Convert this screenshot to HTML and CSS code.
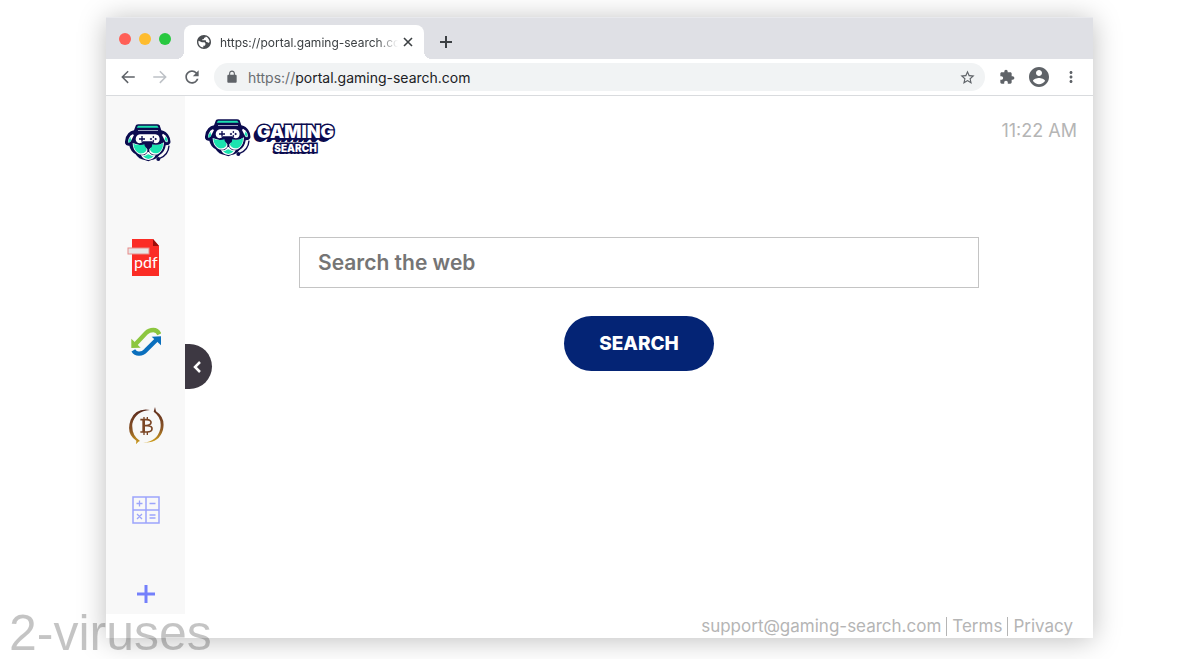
FILE: index.html
```html
<!DOCTYPE html>
<html lang="en">

<head>
    <meta charset="UTF-8">
    <meta name="viewport" content="width=device-width, initial-scale=1.0">
    <title>Gaming Search</title>
    <link rel="stylesheet" href="styles.css">
</head>

<body>

    <svg class="sprite" aria-hidden="true">
        <symbol id="dog" viewBox="44 58 138 112">
            <path fill="#0b0b4f" d="M77 60q3-2 7-2h56q5 0 8 3l5 15q15 4 21 14 8 12 6 24-4 8-14 7-2 20-19 30-9 12-24 14l-9 4-11-4q-18-2-27-17-16-10-19-26-10 2-13-7-1-18 10-30 7-8 17-9z" />
            <path fill="#1be3b0" d="M83 62h58l4 6H79z" />
            <path fill="#9aa0bd" d="M83 75h60v3H83z" />
            <path fill="#fff" d="M67 88q-8 3-12 13-3 9-1 12 6 0 9-7l8-16z" />
            <path fill="#1be3b0" d="M60 96q-6 7-6 17 6 0 9-7z" />
            <path fill="#fff" d="M158 86q9 3 13 14 3 8 0 12-6 0-9-8l-7-14z" />
            <path fill="#1be3b0" d="M166 94q6 7 5 17-5 0-8-8z" />
            <path fill="#fff" d="M89 88h46q12 1 13 14-1 13-12 13-5 0-10-6H98q-5 6-10 6-11-1-12-12 1-14 13-15z" />
            <path fill="none" stroke="#0b0b4f" stroke-width="4" d="M95 93v17M86 102h18" />
            <path fill="#0b0b4f" d="M129 92l3 4-3 4-3-4zM129 104l3 4-3 4-3-4zM122 98l4 4-4 4-4-4zM136 98l4 4-4 4-4-4z" />
            <path fill="#fff" d="M67 114q0 20 14 31 14 9 26 0l7-8 7 8q13 9 26 0 13-11 14-33l-14 7-60 1z" />
            <path fill="#1be3b0" d="M69 115q0 12 6 20 8 12 20 10 10-1 14-11l-4-17q-12 4-20 2-9 2-16-4zM158 113q1 13-5 22-7 11-19 10-10-1-15-11l4-17q12 5 20 2 9 0 15-6z" />
            <path fill="#fff" d="M92 150q10 2 16-4l6-7 6 7q7 6 16 4-5 13-22 15-17-2-22-15z" />
            <path fill="#1be3b0" d="M98 153q8 0 12-4 4-3 8 0 5 4 12 4-6 8-16 9-10-1-16-9z" />
            <path fill="#0b0b4f" d="M102 117q5-4 12-4t12 4q0 9-6 12l-3 4v8h-6v-8l-3-4q-6-4-6-12z" />
            <path fill="none" stroke="#f8f8f8" stroke-width="8" d="M172 122q-2 24-24 34" />
            <path fill="none" stroke="#0b0b4f" stroke-width="4" d="M176 122q-2 29-28 38" />
            <circle cx="144" cy="162" r="6" fill="#0b0b4f" />
        </symbol>
    </svg>

    <div class="browser">
        <div class="tab-bar">
            <div class="lights">
                <span class="light red"></span>
                <span class="light yellow"></span>
                <span class="light green"></span>
            </div>
            <div class="tab">
                <svg class="globe" viewBox="2 2 20 20" fill="#4a4d51">
                    <path d="M12 2C6.48 2 2 6.48 2 12s4.480 10 10 10 10-4.480 10-10S17.520 2 12 2zm-1 17.930c-3.950-.49-7-3.850-7-7.930 0-.62.08-1.210.21-1.790L9 12.500h3c1.100 0 2 .9 2 2v1c0 1.100-.9 2-2 2h-1zM17.900 13.390c-.26-.81-1-1.390-1.900-1.390h-1v-1.500c0-.55-.45-1-1-1H9.500v-1.500H11c.55 0 1-.45 1-1V6h1c1.100 0 1.500-.9 1.500-1.700 2.930 1.190 5.500 4.360 5.500 7.700z" />
                </svg>
                <span class="tab-title">https://portal.gaming-search.com</span>
                <button class="icon-btn tab-close" aria-label="Close tab">
                    <svg width="10" height="10" viewBox="0 0 10 10" fill="none" stroke="#3c4043" stroke-width="1.600">
                        <path d="M1 1l8 8M9 1l-8 8" />
                    </svg>
                </button>
            </div>
            <button class="icon-btn new-tab" aria-label="New tab">
                <svg width="12" height="12" viewBox="0 0 12 12" fill="none" stroke="#3c4043" stroke-width="2">
                    <path d="M6 0v12M0 6h12" />
                </svg>
            </button>
        </div>

        <div class="toolbar">
            <button class="icon-btn" aria-label="Back">
                <svg width="18" height="18" viewBox="0 0 24 24" fill="#5f6368">
                    <path d="M21 11H6.800l6.100-6.100L11.500 3.500 3 12l8.500 8.500 1.400-1.400L6.800 13H21z" />
                </svg>
            </button>
            <button class="icon-btn" aria-label="Forward">
                <svg width="18" height="18" viewBox="0 0 24 24" fill="#bdc1c6">
                    <path d="M3 11h14.200l-6.100-6.100 1.400-1.400L21 12l-8.500 8.500-1.400-1.400 6.100-6.100H3z" />
                </svg>
            </button>
            <button class="icon-btn" aria-label="Reload">
                <svg width="20" height="20" viewBox="0 0 24 24" fill="#5f6368">
                    <path d="M17.650 6.350C16.200 4.900 14.210 4 12 4c-4.420 0-7.990 3.580-7.990 8s3.570 8 7.990 8c3.730 0 6.840-2.550 7.730-6h-2.080c-.82 2.330-3.040 4-5.650 4-3.310 0-6-2.690-6-6s2.690-6 6-6c1.660 0 3.140.69 4.220 1.780L13 11h7V4l-2.350 2.350z" />
                </svg>
            </button>
            <div class="omnibox">
                <svg width="14" height="14" viewBox="0 0 24 24" fill="#5f6368">
                    <path d="M18 8h-1V6c0-2.760-2.240-5-5-5S7 3.240 7 6v2H6c-1.100 0-2 .9-2 2v10c0 1.100.9 2 2 2h12c1.100 0 2-.9 2-2V10c0-1.100-.9-2-2-2zM8.900 8V6c0-1.710 1.390-3.100 3.100-3.100s3.100 1.390 3.100 3.100v2z" />
                </svg>
                <span class="url"><span class="scheme">https://</span>portal.gaming-search.com</span>
                <button class="icon-btn" aria-label="Bookmark this page">
                    <svg width="17" height="17" viewBox="0 0 24 24" fill="#5f6368">
                        <path d="M22 9.240l-7.190-.62L12 2 9.190 8.630 2 9.240l5.460 4.730L5.820 21 12 17.270 18.180 21l-1.630-7.030L22 9.240zM12 15.400l-3.760 2.270 1-4.280-3.320-2.880 4.380-.38L12 6.100l1.710 4.040 4.380.38-3.320 2.880 1 4.280L12 15.400z" />
                    </svg>
                </button>
            </div>
            <button class="icon-btn" aria-label="Extensions">
                <svg width="16" height="16" viewBox="0 0 24 24" fill="#5f6368">
                    <path d="M20.500 11H19V7c0-1.100-.9-2-2-2h-4V3.500C13 2.120 11.880 1 10.500 1S8 2.120 8 3.500V5H4c-1.100 0-1.990.9-1.990 2v3.800H3.500c1.490 0 2.700 1.210 2.700 2.700s-1.210 2.700-2.700 2.700H2V20c0 1.100.9 2 2 2h3.800v-1.500c0-1.490 1.210-2.700 2.700-2.700s2.700 1.210 2.700 2.700V22H17c1.100 0 2-.9 2-2v-4h1.500c1.380 0 2.500-1.120 2.500-2.500S21.880 11 20.500 11z" />
                </svg>
            </button>
            <button class="icon-btn" aria-label="Profile">
                <svg width="20" height="20" viewBox="2 2 20 20" fill="#5f6368">
                    <path d="M12 2C6.480 2 2 6.480 2 12s4.480 10 10 10 10-4.480 10-10S17.520 2 12 2zm0 3c1.660 0 3 1.340 3 3s-1.340 3-3 3-3-1.340-3-3 1.340-3 3-3zm0 14.200c-2.500 0-4.710-1.280-6-3.220.03-1.990 4-3.080 6-3.080 1.990 0 5.970 1.090 6 3.080-1.290 1.940-3.500 3.220-6 3.220z" />
                </svg>
            </button>
            <button class="icon-btn" aria-label="Menu">
                <svg width="18" height="18" viewBox="0 0 24 24" fill="#5f6368">
                    <path d="M12 8c1.100 0 2-.9 2-2s-.9-2-2-2-2 .9-2 2 .9 2 2 2zm0 2c-1.100 0-2 .9-2 2s.9 2 2 2 2-.9 2-2-.9-2-2-2zm0 6c-1.100 0-2 .9-2 2s.9 2 2 2 2-.9 2-2-.9-2-2-2z" />
                </svg>
            </button>
        </div>

        <div class="page">
            <nav class="sidebar">
                <a href="#" class="side-logo" aria-label="Home">
                    <svg width="46" height="38"><use href="#dog" /></svg>
                </a>
                <a href="#" class="side-link" aria-label="PDF">
                    <svg width="38" height="40" viewBox="0 0 38 40">
                        <path fill="#fb2c25" d="M5 1h21l6 7v30H5z" />
                        <path fill="#9b0f0c" d="M26 1l6 7h-6z" />
                        <rect x="1" y="10" width="21" height="6" fill="#e6e6e6" stroke="#e88a88" />
                        <text x="7" y="30" class="pdf-text">pdf</text>
                    </svg>
                </a>
                <a href="#" class="side-link" aria-label="Converter">
                    <svg width="30" height="30" viewBox="0 0 90 90">
                        <path fill="none" stroke="#8cc63f" stroke-width="13" d="M14 51l31-33q9-9 22-9 12 0 18 13" />
                        <path fill="#8cc63f" d="M1 35v28l28-1z" />
                        <path fill="none" stroke="#0b6fbd" stroke-width="13" d="M76 39L45 70q-10 11-22 10-10 0-16-10" />
                        <path fill="#0b6fbd" d="M90 28v27L62 29z" />
                    </svg>
                </a>
                <a href="#" class="side-link" aria-label="Bitcoin">
                    <svg width="36" height="38" viewBox="0 0 108 114">
                        <defs>
                            <linearGradient id="gold" x1="0" y1="0" x2="0" y2="1">
                                <stop offset="0" stop-color="#5b2a1c" />
                                <stop offset="0.600" stop-color="#8a5526" />
                                <stop offset="1" stop-color="#d0a01c" />
                            </linearGradient>
                        </defs>
                        <path fill="url(#gold)" d="M66 9Q24 2 8 38-7 80 25 101l-1 11 7-8 5-2Q10 85 13 50 22 13 66 9z" />
                        <path fill="url(#gold)" d="M81 0l-4 14q26 18 20 51-10 40-52 41 48 4 60-38 8-36-21-55z" />
                        <path fill="none" stroke="#7a4524" stroke-width="4" d="M48 30v9M58 30v9M48 75v9M58 75v9" />
                        <path fill="none" stroke="#7a4524" stroke-width="5" d="M37 38h19q14 1 13 9-1 8-14 9H46M46 56h12q15 1 14 10-1 9-15 9H37" />
                        <path fill="none" stroke="#7a4524" stroke-width="8" d="M47 38v37" />
                    </svg>
                </a>
                <a href="#" class="side-link" aria-label="Calculator">
                    <svg width="28" height="28" viewBox="0 0 28 28" fill="none" stroke="#9ca4fb">
                        <path stroke-width="1.500" d="M1 1h26v26H1zM14 1v26M1 14h26" />
                        <path stroke-width="1.300" d="M7.500 4.500v6M4.500 7.500h6M17.500 7.500h6M17.500 19h6M17.500 22h6M5 18l5 5M10 18l-5 5" />
                    </svg>
                </a>
                <a href="#" class="side-link" aria-label="Add">
                    <svg width="18" height="18" viewBox="0 0 18 18" fill="none" stroke="#7480fb" stroke-width="3">
                        <path d="M9 0v18M0 9h18" />
                    </svg>
                </a>
            </nav>

            <button class="toggle" aria-label="Hide sidebar">
                <svg width="10" height="12" viewBox="0 0 10 12" fill="none" stroke="#fff" stroke-width="2.500">
                    <path d="M8 1L3 6l5 5" />
                </svg>
            </button>

            <main class="main">
                <header class="header">
                    <a href="#" class="logo">
                        <svg width="46" height="38"><use href="#dog" /></svg>
                        <span class="wordmark">
                            <span class="word-top">GAMING</span>
                            <span class="word-bottom">SEARCH</span>
                        </span>
                    </a>
                    <time class="clock">11:22 AM</time>
                </header>

                <form class="search">
                    <input type="text" class="search-input" placeholder="Search the web" aria-label="Search the web">
                    <button type="submit" class="search-btn">SEARCH</button>
                </form>

                <footer class="footer">
                    <a href="#">support@gaming-search.com</a>
                    <a href="#">Terms</a>
                    <a href="#">Privacy</a>
                </footer>
            </main>
        </div>
    </div>

    <div class="watermark">2-viruses</div>

</body>

</html>
```
FILE: styles.css
```css
* {
    box-sizing: border-box;
}

body {
    display: flex;
    min-height: 100vh;
    margin: 0;
    padding: 17px 107px 21px 106px;
    background-color: #fff;
    font-family: Inter, sans-serif;
    position: relative;
}

a {
    color: inherit;
    text-decoration: none;
}

svg {
    display: block;
    flex: none;
}

.sprite {
    position: absolute;
    width: 0;
    height: 0;
}

.browser {
    flex: 1;
    min-width: 0;
    display: flex;
    flex-direction: column;
    background-color: #fff;
    box-shadow: 0 2px 26px rgba(0, 0, 0, 0.26);
}

.icon-btn {
    display: flex;
    align-items: center;
    justify-content: center;
    flex: none;
    width: 20px;
    height: 20px;
    padding: 0;
    border: none;
    background: none;
    cursor: pointer;
}

/* tabs */
.tab-bar {
    display: flex;
    align-items: flex-end;
    height: 42px;
    padding-left: 13px;
    background-color: #dfe0e5;
    border-top: 1px solid #e8e9ed;
}

.lights {
    display: flex;
    gap: 8px;
    padding-bottom: 14px;
    margin-right: 13px;
}

.light {
    width: 12px;
    height: 12px;
    border-radius: 50%;
}

.red {
    background-color: #ff5f57;
}

.yellow {
    background-color: #febc2e;
}

.green {
    background-color: #28c840;
}

.tab {
    display: flex;
    align-items: center;
    width: 240px;
    height: 34px;
    padding: 0 6px 0 13px;
    background-color: #fff;
    border-radius: 8px 8px 0 0;
    position: relative;
}

.tab::before,
.tab::after {
    content: "";
    position: absolute;
    bottom: 0;
    width: 8px;
    height: 8px;
}

.tab::before {
    right: 100%;
    background: radial-gradient(circle at 0 0, transparent 8px, #fff 8px);
}

.tab::after {
    left: 100%;
    background: radial-gradient(circle at 100% 0, transparent 8px, #fff 8px);
}

.globe {
    width: 14px;
    height: 14px;
    margin-right: 9px;
}

.tab-title {
    flex: 1;
    overflow: hidden;
    white-space: nowrap;
    font-size: 12px;
    color: #3c4043;
    mask-image: linear-gradient(to right, #000 88%, transparent);
}

.new-tab {
    margin: 0 0 7px 12px;
}

/* address bar */
.toolbar {
    display: flex;
    align-items: center;
    gap: 12px;
    height: 37px;
    padding: 0 12px;
    border-bottom: 1px solid #d9dbde;
}

.omnibox {
    flex: 1;
    display: flex;
    align-items: center;
    gap: 9px;
    height: 28px;
    padding: 0 8px 0 11px;
    background-color: #f1f3f4;
    border-radius: 14px;
}

.url {
    flex: 1;
    font-size: 14px;
    color: #202124;
}

.scheme {
    color: #6a6d71;
}

/* page */
.page {
    flex: 1;
    display: flex;
    position: relative;
}

.sidebar {
    flex: none;
    display: flex;
    flex-direction: column;
    align-items: center;
    gap: 48px;
    width: 79px;
    margin-bottom: 24px;
    padding-top: 28px;
    background-color: #f8f8f8;
}

.side-logo {
    margin: 0 0 30px 4px;
}

.side-link {
    display: flex;
    align-items: center;
    justify-content: center;
    width: 79px;
    height: 36px;
}

.pdf-text {
    font-family: Lato, sans-serif;
    font-size: 16px;
    fill: #fff;
}

.toggle {
    position: absolute;
    top: 248px;
    left: 79px;
    display: flex;
    align-items: center;
    width: 27px;
    height: 45px;
    padding: 0 0 0 7px;
    border: none;
    border-radius: 0 23px 23px 0;
    background-color: #3d3842;
    cursor: pointer;
}

.main {
    flex: 1;
    min-width: 0;
    display: flex;
    flex-direction: column;
}

.header {
    display: flex;
    justify-content: space-between;
    align-items: flex-start;
    padding: 23px 16px 0 20px;
}

.logo {
    display: flex;
    align-items: center;
    gap: 6px;
}

.wordmark {
    display: flex;
    flex-direction: column;
    align-items: center;
    font-weight: 900;
    color: #fff;
    -webkit-text-stroke: 3px #0b0b4f;
    paint-order: stroke fill;
}

.word-top {
    font-size: 18px;
    line-height: 20px;
    text-shadow: -1px 1px #0b0b4f, -2px 2px #0b0b4f, -3px 3px #0b0b4f, -4px 4px #0b0b4f;
}

.word-bottom {
    font-size: 10px;
    line-height: 12px;
    text-shadow: -1px 1px #0b0b4f, -2px 2px #0b0b4f;
}

.clock {
    font-size: 18px;
    line-height: 24px;
    color: #b5b5b5;
}

.search {
    display: flex;
    flex-direction: column;
    align-items: center;
    gap: 28px;
    margin-top: 80px;
    padding: 0 20px;
}

.search-input {
    width: 100%;
    max-width: 680px;
    height: 51px;
    padding: 0 18px;
    border: 1px solid #c4c4c4;
    background-color: #fff;
    font-family: inherit;
    font-size: 21px;
    font-weight: 600;
    color: #333;
}

.search-input::placeholder {
    color: #757575;
}

.search-btn {
    height: 55px;
    padding: 0 35px;
    border: none;
    border-radius: 28px;
    background-color: #042475;
    font-family: inherit;
    font-size: 19px;
    font-weight: 800;
    color: #fff;
    cursor: pointer;
}

.footer {
    display: flex;
    justify-content: flex-end;
    margin-top: auto;
    padding: 0 20px 2px;
    font-size: 17px;
    line-height: 19px;
    color: #b5b5b5;
}

.footer a + a {
    margin-left: 5px;
    padding-left: 5px;
    border-left: 1px solid #b5b5b5;
}

.watermark {
    position: absolute;
    left: 9px;
    bottom: 0;
    font-family: "Liberation Sans", Arial, sans-serif;
    font-size: 50px;
    line-height: 52px;
    color: rgba(0, 0, 0, 0.23);
    pointer-events: none;
}
```
